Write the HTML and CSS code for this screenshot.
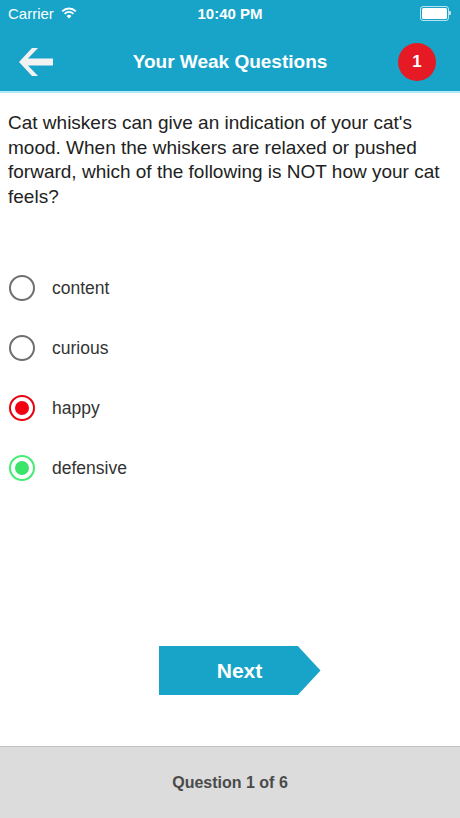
FILE: index.html
```html
<!DOCTYPE html>
<html>
  <head>
    <meta charset="UTF-8" />
    <title>Your Weak Questions</title>
    <link rel="stylesheet" href="styles.css">
  </head>
  <body>
    <div class="app">
      <div class="top">
        <div class="status-bar">
          <div class="carrier">
            Carrier
            <svg class="wifi" width="16" height="12" viewBox="0 0 16 12">
              <path d="M8 11.5 L5.6 8.9 A3.4 3.4 0 0 1 10.4 8.9 Z" fill="#fff"/>
              <path d="M3.6 6.8 A6.2 6.2 0 0 1 12.4 6.8" stroke="#fff" stroke-width="1.8" fill="none"/>
              <path d="M1.2 4.3 A9.6 9.6 0 0 1 14.8 4.3" stroke="#fff" stroke-width="1.8" fill="none"/>
            </svg>
          </div>
          <div class="clock">10:40 PM</div>
          <div class="battery">
            <div class="battery-body"><div class="battery-fill"></div></div>
            <div class="battery-tip"></div>
          </div>
        </div>
        <div class="nav-bar">
          <div class="back">
            <svg width="38" height="32" viewBox="0 0 38 32">
              <path d="M15 2 L2 16 L15 30 L21 30 L11 19.5 L36 19.5 L36 12.5 L11 12.5 L21 2 Z" fill="#f2f2f2"/>
            </svg>
          </div>
          <h1>Your Weak Questions</h1>
          <div class="badge-wrap"><div class="badge">1</div></div>
        </div>
      </div>

      <div class="content">
        <p class="question">Cat whiskers can give an indication of your cat's mood. When the whiskers are relaxed or pushed forward, which of the following is NOT how your cat feels?</p>

        <div class="options">
          <div class="option">
            <span class="radio"></span>
            <span class="label">content</span>
          </div>
          <div class="option">
            <span class="radio"></span>
            <span class="label">curious</span>
          </div>
          <div class="option wrong">
            <span class="radio"><span class="dot"></span></span>
            <span class="label">happy</span>
          </div>
          <div class="option right">
            <span class="radio"><span class="dot"></span></span>
            <span class="label">defensive</span>
          </div>
        </div>

        <div class="actions">
          <button class="next">Next</button>
        </div>
      </div>

      <div class="footer">Question 1 of 6</div>
    </div>
  </body>
</html>
```

FILE: styles.css
```css
body {
  font-family: "Liberation Sans", Arial, sans-serif;
  margin: 0;
  background: #fff;
}
.app {
  width: 460px;
  height: 818px;
  display: flex;
  flex-direction: column;
}
.top {
  background: #17a4c8;
  border-bottom: 2px solid #b5e8f5;
}
.status-bar {
  height: 26px;
  display: flex;
  align-items: center;
  justify-content: space-between;
  padding: 0 8px;
  color: #fff;
  font-size: 15px;
  position: relative;
}
.carrier {
  display: flex;
  align-items: center;
  gap: 7px;
}
.clock {
  position: absolute;
  left: 0;
  right: 0;
  text-align: center;
  font-weight: bold;
  font-size: 15px;
}
.battery {
  display: flex;
  align-items: center;
  margin-right: 1px;
}
.battery-body {
  width: 25px;
  height: 11px;
  border: 1px solid rgba(255,255,255,0.7);
  border-radius: 3px;
  padding: 1px;
}
.battery-fill {
  width: 100%;
  height: 100%;
  background: #fff;
  border-radius: 1.5px;
}
.battery-tip {
  width: 2px;
  height: 4px;
  background: rgba(255,255,255,0.7);
  border-radius: 0 1px 1px 0;
}
.nav-bar {
  height: 59px;
  padding: 6px 16px 0 16px;
  display: grid;
  grid-template-columns: 1fr auto 1fr;
  align-items: center;
}
.back {
  display: flex;
  margin-left: 1px;
}
.nav-bar h1 {
  margin: 0;
  color: #fff;
  font-size: 19px;
  font-weight: bold;
}
.badge-wrap {
  display: flex;
  justify-content: flex-end;
}
.badge {
  width: 38px;
  height: 38px;
  border-radius: 50%;
  background: #e51a24;
  color: #fff;
  font-size: 17px;
  font-weight: bold;
  display: flex;
  align-items: center;
  justify-content: center;
  margin-right: 8px;
}
.content {
  flex: 1;
  display: flex;
  flex-direction: column;
  padding: 0 8px;
}
.question {
  margin: 18px 0 0;
  font-size: 19px;
  line-height: 24.5px;
  color: #222;
}
.options {
  margin-top: 65px;
  display: flex;
  flex-direction: column;
  gap: 32px;
}
.option {
  display: flex;
  align-items: center;
  height: 28px;
}
.radio {
  width: 22px;
  height: 22px;
  border: 2.5px solid #6f6f6f;
  border-radius: 50%;
  display: flex;
  align-items: center;
  justify-content: center;
  margin-left: 1px;
  margin-right: 17px;
}
.dot {
  width: 14px;
  height: 14px;
  border-radius: 50%;
}
.wrong .radio {
  border-color: #e8000d;
}
.wrong .dot {
  background: #f00010;
}
.right .radio {
  border-color: #43ec72;
}
.right .dot {
  background: #3be46a;
}
.label {
  font-size: 17.5px;
  color: #333;
}
.actions {
  margin-top: auto;
  margin-bottom: 51px;
  display: flex;
  justify-content: center;
}
.next {
  width: 162px;
  height: 49px;
  margin-left: 19px;
  border: none;
  background: #17a4c8;
  color: #fff;
  font-family: inherit;
  font-size: 21px;
  font-weight: bold;
  padding: 0;
  clip-path: polygon(0 0, 86% 0, 100% 50%, 86% 100%, 0 100%);
}
.footer {
  height: 71px;
  background: #dcdcdc;
  border-top: 1px solid #c2c2c2;
  display: flex;
  align-items: center;
  justify-content: center;
  font-size: 16px;
  font-weight: bold;
  color: #4a4a4a;
}
```
